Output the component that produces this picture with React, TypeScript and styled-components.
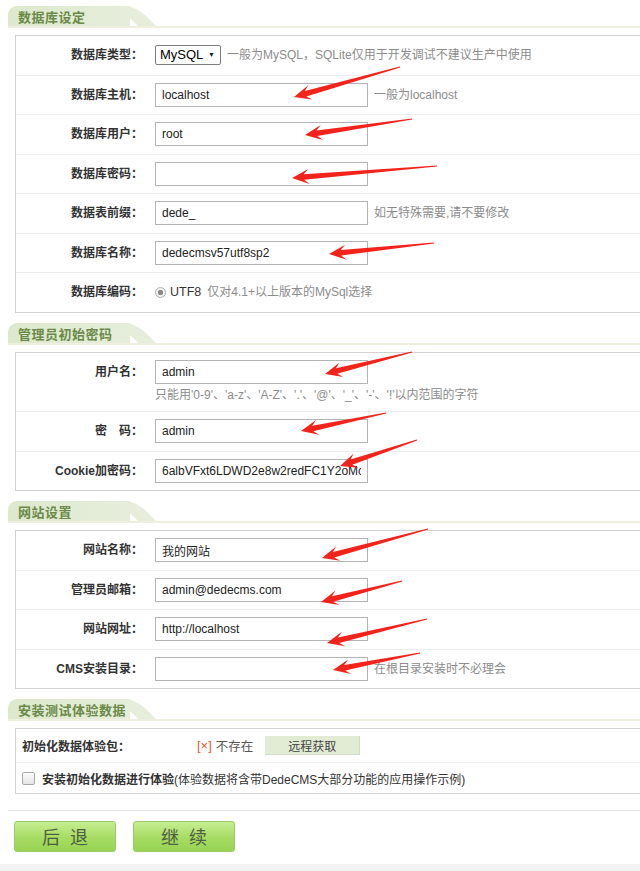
import React from "react";
import styled, { createGlobalStyle } from "styled-components";

const GlobalStyle = createGlobalStyle`
  html, body { margin: 0; padding: 0; background: #fff; overflow: hidden; }
  body {
    font-family: "Liberation Sans", "Noto Sans CJK SC", sans-serif;
    font-size: 12px;
    color: #333;
  }
  * { box-sizing: border-box; }
`;

const Page = styled.div`
  position: relative;
  width: 640px;
  height: 871px;
  padding-top: 6px;
  overflow: hidden;
`;

const Header = styled.div<{ $first?: boolean }>`
  margin: ${(p) => (p.$first ? 0 : 10)}px 0 0 8px;
  border-bottom: 2px solid #efeedf;
  height: 22px;
`;

const Tab = styled.div`
  position: relative;
  width: 122px;
  height: 20px;
  padding: 2px 0 0 10px;
  background: linear-gradient(to right, #dde8cd, #e6eedb);
  border-top-left-radius: 9px;
  color: #6b8a48;
  font-size: 13px;
  font-weight: bold;
  line-height: 20px;
  letter-spacing: 0.5px;
  white-space: nowrap;
  &::after {
    content: "";
    position: absolute;
    top: 0;
    left: 110px;
    width: 18px;
    height: 20px;
    background: #e6eedb;
    border-top-right-radius: 10px;
    transform: skewX(45deg);
    transform-origin: top left;
  }
`;

const Panel = styled.div`
  margin: 7px -30px 0 15px;
  border: 1px solid #d2d2d2;
  background: #fff;
`;

const Row = styled.div`
  display: grid;
  grid-template-columns: 127px 1fr;
  column-gap: 12px;
  padding: 7px 0 7.5px;
  & + & {
    border-top: 1px solid #ececec;
  }
`;

const Label = styled.div`
  text-align: right;
  font-weight: bold;
  line-height: 24px;
  color: #333;
  white-space: nowrap;
`;

const Value = styled.div<{ $stack?: boolean }>`
  display: flex;
  flex-direction: ${(p) => (p.$stack ? "column" : "row")};
  align-items: ${(p) => (p.$stack ? "flex-start" : "center")};
  gap: ${(p) => (p.$stack ? 2 : 6)}px;
  min-height: 24px;
`;

const TextInput = styled.input`
  width: 213px;
  height: 24px;
  margin: 0;
  border: 1px solid #b4b4b4;
  padding: 0 6px;
  font: 12px "Liberation Sans", "Noto Sans CJK SC", sans-serif;
  color: #222;
  background: #fff;
  outline: none;
`;

const Hint = styled.span`
  color: #8c8c8c;
  line-height: 18px;
  white-space: nowrap;
`;

const SelectBox = styled.div`
  position: relative;
  width: 66px;
  height: 20px;
  border: 1px solid #7d7d7d;
  border-radius: 2px;
  padding-left: 4px;
  font-size: 13px;
  line-height: 18px;
  color: #000;
  background: #fff;
`;

const SelectArrow = styled.span`
  position: absolute;
  right: 5px;
  top: 0;
  font-size: 7px;
  line-height: 18px;
  color: #222;
`;

const RadioDot = styled.span`
  display: inline-block;
  width: 11px;
  height: 11px;
  border-radius: 50%;
  border: 1px solid #b0b0b0;
  background: radial-gradient(circle, #8a8a8a 0 2.5px, #f2f2f2 3px);
  margin-right: -2px;
`;

const Strong = styled.span`
  color: #333;
  font-size: 12.5px;
  white-space: nowrap;
`;

const ExtraRow = styled.div<{ $h: number }>`
  display: flex;
  align-items: center;
  height: ${(p) => p.$h}px;
  padding-left: 6px;
  & + & {
    border-top: 1px solid #ececec;
  }
`;

const ExtraLabel = styled.div`
  width: 175px;
  font-weight: bold;
  color: #333;
  white-space: nowrap;
`;

const Missing = styled.span`
  color: #e4592f;
  font-size: 13px;
  margin-right: 4px;
`;

const MissingText = styled.span`
  color: #555;
  font-size: 12.5px;
`;

const RemoteButton = styled.button`
  margin-left: 12px;
  width: 95px;
  height: 19px;
  padding: 0;
  border: none;
  border-right: 1px solid #d3dac8;
  border-bottom: 1px solid #d3dac8;
  background: #e2ecd4;
  color: #444;
  font: 12px "Liberation Sans", "Noto Sans CJK SC", sans-serif;
  cursor: pointer;
`;

const CheckBox = styled.span`
  display: inline-block;
  width: 13px;
  height: 13px;
  border: 1px solid #a9a9a9;
  border-radius: 2px;
  background: linear-gradient(#fdfdfd, #e4e4e4);
  margin-right: 7px;
`;

const CheckText = styled.span`
  color: #333;
  white-space: nowrap;
  & b {
    font-weight: bold;
  }
`;

const Divider = styled.div`
  margin: 15.5px 0 0 8px;
  border-top: 1px solid #e3e3e3;
`;

const ButtonBar = styled.div`
  display: flex;
  gap: 17px;
  margin: 10px 0 0 14px;
`;

const GreenButton = styled.button`
  width: 102px;
  height: 31px;
  padding: 0;
  border: 1px solid #9acb68;
  border-radius: 3px;
  background: linear-gradient(#c6ee92, #a6dc62 55%, #98d454);
  color: #4f5e42;
  font: 18px "Liberation Sans", "Noto Sans CJK SC", sans-serif;
  word-spacing: 5px;
  cursor: pointer;
`;

const BottomBand = styled.div`
  margin-top: 12px;
  height: 20px;
  background: #f3f3f3;
`;

const ArrowLayer = styled.svg`
  position: absolute;
  top: 0;
  left: 0;
  pointer-events: none;
`;

type Arrow = [number, number, number, number];

const ARROWS: Arrow[] = [
  [400, 67, 294, 97],
  [412, 119, 305, 135],
  [437, 166, 292, 178],
  [434, 243, 329, 254],
  [412, 352, 325, 374],
  [386, 413, 301, 431],
  [417, 440, 340, 466],
  [428, 529, 322, 558],
  [402, 581, 321, 602],
  [427, 619, 327, 643],
  [420, 653, 333, 670],
];

function arrowPoints([tx, ty, hx, hy]: Arrow): string {
  const dx = hx - tx;
  const dy = hy - ty;
  const len = Math.hypot(dx, dy);
  const ux = dx / len;
  const uy = dy / len;
  const nx = -uy;
  const ny = ux;
  const neck = 12;
  const barb = 17;
  const pts: [number, number][] = [
    [tx + nx * 0.6, ty + ny * 0.6],
    [hx - ux * neck + nx * 2.8, hy - uy * neck + ny * 2.8],
    [hx - ux * barb + nx * 7.5, hy - uy * barb + ny * 7.5],
    [hx, hy],
    [hx - ux * barb - nx * 7.5, hy - uy * barb - ny * 7.5],
    [hx - ux * neck - nx * 2.8, hy - uy * neck - ny * 2.8],
    [tx - nx * 0.6, ty - ny * 0.6],
  ];
  return pts.map(([x, y]) => `${x.toFixed(1)},${y.toFixed(1)}`).join(" ");
}

const Field = ({ value }: { value: string }) => <TextInput type="text" value={value} readOnly />;

export default function App() {
  return (
    <Page>
      <GlobalStyle />

      <Header $first>
        <Tab>数据库设定</Tab>
      </Header>
      <Panel>
        <Row>
          <Label>数据库类型：</Label>
          <Value>
            <SelectBox>
              MySQL
              <SelectArrow>▼</SelectArrow>
            </SelectBox>
            <Hint>一般为MySQL，SQLite仅用于开发调试不建议生产中使用</Hint>
          </Value>
        </Row>
        <Row>
          <Label>数据库主机：</Label>
          <Value>
            <Field value="localhost" />
            <Hint>一般为localhost</Hint>
          </Value>
        </Row>
        <Row>
          <Label>数据库用户：</Label>
          <Value>
            <Field value="root" />
          </Value>
        </Row>
        <Row>
          <Label>数据库密码：</Label>
          <Value>
            <Field value="" />
          </Value>
        </Row>
        <Row>
          <Label>数据表前缀：</Label>
          <Value>
            <Field value="dede_" />
            <Hint>如无特殊需要,请不要修改</Hint>
          </Value>
        </Row>
        <Row>
          <Label>数据库名称：</Label>
          <Value>
            <Field value="dedecmsv57utf8sp2" />
          </Value>
        </Row>
        <Row>
          <Label>数据库编码：</Label>
          <Value>
            <RadioDot />
            <Strong>UTF8</Strong>
            <Hint>仅对4.1+以上版本的MySql选择</Hint>
          </Value>
        </Row>
      </Panel>

      <Header>
        <Tab>管理员初始密码</Tab>
      </Header>
      <Panel>
        <Row>
          <Label>用户名：</Label>
          <Value $stack>
            <Field value="admin" />
            <Hint>只能用'0-9'、'a-z'、'A-Z'、'.'、'@'、'_'、'-'、'!'以内范围的字符</Hint>
          </Value>
        </Row>
        <Row>
          <Label>密　码：</Label>
          <Value>
            <Field value="admin" />
          </Value>
        </Row>
        <Row>
          <Label>Cookie加密码：</Label>
          <Value>
            <Field value="6albVFxt6LDWD2e8w2redFC1Y2oMc" />
          </Value>
        </Row>
      </Panel>

      <Header>
        <Tab>网站设置</Tab>
      </Header>
      <Panel>
        <Row>
          <Label>网站名称：</Label>
          <Value>
            <Field value="我的网站" />
          </Value>
        </Row>
        <Row>
          <Label>管理员邮箱：</Label>
          <Value>
            <Field value="admin@dedecms.com" />
          </Value>
        </Row>
        <Row>
          <Label>网站网址：</Label>
          <Value>
            <Field value="http://localhost" />
          </Value>
        </Row>
        <Row>
          <Label>CMS安装目录：</Label>
          <Value>
            <Field value="" />
            <Hint>在根目录安装时不必理会</Hint>
          </Value>
        </Row>
      </Panel>

      <Header>
        <Tab>安装测试体验数据</Tab>
      </Header>
      <Panel>
        <ExtraRow $h={33}>
          <ExtraLabel>初始化数据体验包：</ExtraLabel>
          <Missing>[×]</Missing>
          <MissingText>不存在</MissingText>
          <RemoteButton type="button">远程获取</RemoteButton>
        </ExtraRow>
        <ExtraRow $h={31}>
          <CheckBox />
          <CheckText>
            <b>安装初始化数据进行体验</b>(体验数据将含带DedeCMS大部分功能的应用操作示例)
          </CheckText>
        </ExtraRow>
      </Panel>

      <Divider />
      <ButtonBar>
        <GreenButton type="button">后 退</GreenButton>
        <GreenButton type="button">继 续</GreenButton>
      </ButtonBar>
      <BottomBand />

      <ArrowLayer width={640} height={871} viewBox="0 0 640 871">
        {ARROWS.map((a, i) => (
          <polygon key={i} points={arrowPoints(a)} fill="#f2231b" />
        ))}
      </ArrowLayer>
    </Page>
  );
}
